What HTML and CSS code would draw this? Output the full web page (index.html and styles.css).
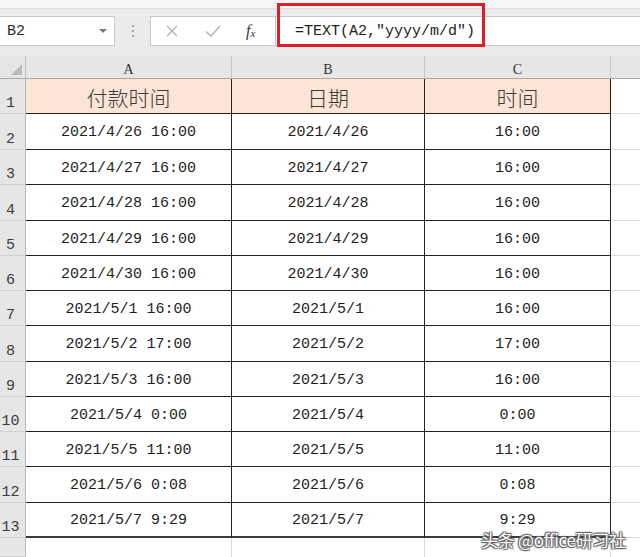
FILE: index.html
```html
<!DOCTYPE html>
<html lang="zh">
<head>
<meta charset="utf-8">
<title>TEXT</title>
<link rel="stylesheet" href="styles.css">
</head>
<body>
<div class="app">
  <div class="topbar">
    <div class="strip"></div>
    <div class="bar">
      <div class="namebox"><span class="nb-text">B2</span><span class="caret"></span></div>
      <div class="sep"><span></span><span></span><span></span></div>
      <div class="btnbox">
        <svg class="ico" width="16" height="16" viewBox="0 0 16 16"><path d="M3 3L13 13M13 3L3 13" stroke="#b4b4b4" stroke-width="1.4" fill="none"/></svg>
        <svg class="ico" width="18" height="16" viewBox="0 0 18 16"><path d="M2 8.5L7 13L16 3" stroke="#b4b4b4" stroke-width="1.4" fill="none"/></svg>
        <span class="fx">f<sub>x</sub></span>
      </div>
      <div class="formula">=TEXT(A2,″yyyy/m/d″)</div>
    </div>
    <div class="redbox"></div>
  </div>

  <div class="sheet">
    <div class="corner"><span class="tri"></span></div>
    <div class="colhead">A</div>
    <div class="colhead">B</div>
    <div class="colhead">C</div>
    <div class="colhead light"></div>

    <div class="rowhead">1</div>
    <div class="hd">付款时间</div>
    <div class="hd">日期</div>
    <div class="hd">时间</div>
    <div class="ext"></div>

    <div class="rowhead">2</div>
    <div class="cell">2021/4/26 16:00</div>
    <div class="cell">2021/4/26</div>
    <div class="cell">16:00</div>
    <div class="ext"></div>

    <div class="rowhead">3</div>
    <div class="cell">2021/4/27 16:00</div>
    <div class="cell">2021/4/27</div>
    <div class="cell">16:00</div>
    <div class="ext"></div>

    <div class="rowhead">4</div>
    <div class="cell">2021/4/28 16:00</div>
    <div class="cell">2021/4/28</div>
    <div class="cell">16:00</div>
    <div class="ext"></div>

    <div class="rowhead">5</div>
    <div class="cell">2021/4/29 16:00</div>
    <div class="cell">2021/4/29</div>
    <div class="cell">16:00</div>
    <div class="ext"></div>

    <div class="rowhead">6</div>
    <div class="cell">2021/4/30 16:00</div>
    <div class="cell">2021/4/30</div>
    <div class="cell">16:00</div>
    <div class="ext"></div>

    <div class="rowhead">7</div>
    <div class="cell">2021/5/1 16:00</div>
    <div class="cell">2021/5/1</div>
    <div class="cell">16:00</div>
    <div class="ext"></div>

    <div class="rowhead">8</div>
    <div class="cell">2021/5/2 17:00</div>
    <div class="cell">2021/5/2</div>
    <div class="cell">17:00</div>
    <div class="ext"></div>

    <div class="rowhead">9</div>
    <div class="cell">2021/5/3 16:00</div>
    <div class="cell">2021/5/3</div>
    <div class="cell">16:00</div>
    <div class="ext"></div>

    <div class="rowhead">10</div>
    <div class="cell">2021/5/4 0:00</div>
    <div class="cell">2021/5/4</div>
    <div class="cell">0:00</div>
    <div class="ext"></div>

    <div class="rowhead">11</div>
    <div class="cell">2021/5/5 11:00</div>
    <div class="cell">2021/5/5</div>
    <div class="cell">11:00</div>
    <div class="ext"></div>

    <div class="rowhead">12</div>
    <div class="cell">2021/5/6 0:08</div>
    <div class="cell">2021/5/6</div>
    <div class="cell">0:08</div>
    <div class="ext"></div>

    <div class="rowhead">13</div>
    <div class="cell last">2021/5/7 9:29</div>
    <div class="cell last">2021/5/7</div>
    <div class="cell last">9:29</div>
    <div class="ext"></div>

    <div class="rowhead"></div>
    <div class="blank"></div>
    <div class="blank"></div>
    <div class="blank"></div>
    <div class="blank end"></div>
  </div>

  <div class="watermark">头条 @office研习社</div>
</div>
</body>
</html>
```

FILE: styles.css
```css
* { box-sizing: border-box; }
html, body { margin: 0; padding: 0; background: #ffffff; }
body { width: 640px; height: 557px; overflow: hidden; font-family: "Liberation Mono", "Noto Sans CJK SC", monospace; color: #1e1e1e; }

.app { position: relative; width: 640px; height: 557px; overflow: hidden; }

.topbar { position: relative; height: 56px; background: #ebebeb; }
.strip { height: 9px; background: #f6f6f6; border-bottom: 1px solid #dedede; }
.bar { display: flex; align-items: stretch; height: 30px; margin-top: 7px; }

.namebox { width: 115px; background: #fff; border: 1px solid #c9c9c9; border-left: none; display: flex; align-items: center; justify-content: space-between; padding: 0 7px 0 7px; }
.nb-text { font-family: "Liberation Mono", monospace; font-size: 15px; color: #2a2a2a; }
.caret { width: 0; height: 0; border-left: 4px solid transparent; border-right: 4px solid transparent; border-top: 4px solid #7a7a7a; }

.sep { width: 35px; display: flex; flex-direction: column; align-items: center; justify-content: center; gap: 3px; }
.sep span { width: 2px; height: 2px; background: #a8a8a8; }

.btnbox { width: 126px; background: #fff; border: 1px solid #c9c9c9; display: flex; align-items: center; padding-left: 13px; gap: 0; }
.btnbox .ico { display: block; }
.btnbox .ico:first-child { margin-right: 24px; }
.btnbox .ico:nth-child(2) { margin-right: 24px; }
.fx { font-family: "Liberation Serif", serif; font-style: italic; font-size: 16px; color: #3a3a3a; }
.fx sub { font-size: 11px; vertical-align: -1px; }

.formula { flex: 1; background: #fff; border-top: 1px solid #c9c9c9; border-bottom: 1px solid #c9c9c9; display: flex; align-items: center; padding-left: 19px; font-family: "Liberation Mono", monospace; font-size: 15px; color: #222; letter-spacing: 0; }

.redbox { position: absolute; left: 277px; top: 3px; width: 208px; height: 44px; border: 3px solid #df1f27; }

.sheet { display: grid; grid-template-columns: 26px 206px 193px 186px 29px; grid-template-rows: 23px 35px 36px 35px 36px 35px 35px 35px 36px 35px 35px 35px 36px 35px 19px; }

.corner { background: #e6e6e6; border-right: 1px solid #bdbdbd; border-bottom: 1px solid #a9a9a9; position: relative; }
.tri { position: absolute; right: 3px; bottom: 3px; width: 0; height: 0; border-left: 11px solid transparent; border-bottom: 11px solid #bcbcbc; }

.colhead { background: #e6e6e6; border-right: 1px solid #c8c8c8; border-bottom: 1px solid #a9a9a9; display: flex; align-items: flex-end; justify-content: center; padding-bottom: 0; font-family: "Liberation Serif", serif; font-size: 14px; color: #333; }
.colhead.light { border-right: none; }

.rowhead { background: #e6e6e6; border-right: 1px solid #b9b9b9; border-bottom: 1px solid #d0d0d0; display: flex; align-items: flex-end; justify-content: center; padding-right: 4px; padding-bottom: 1px; font-family: "Liberation Mono", monospace; font-size: 15px; color: #3c3c3c; }

.hd { background: #fce4d6; border-right: 1px solid #222; border-bottom: 1px solid #222; display: flex; align-items: center; justify-content: center; padding-top: 2px; font-family: "Noto Sans CJK SC", sans-serif; font-size: 21px; font-weight: 300; color: #3a3a3a; letter-spacing: 0; }

.cell { background: #fff; border-right: 1px solid #222; border-bottom: 1px solid #222; display: flex; align-items: center; justify-content: center; padding-top: 2px; font-family: "Liberation Mono", monospace; font-size: 15px; color: #1e1e1e; }
.cell.last { border-bottom: 2px solid #3a3a3a; }

.ext { background: #fff; border-bottom: 1px solid #dadada; }
.blank { background: #fff; border-right: 1px solid #dadada; }
.blank.end { border-right: none; }

.watermark { position: absolute; left: 481px; top: 529px; font-family: "Noto Sans CJK SC", sans-serif; font-size: 17px; line-height: 22px; color: #ffffff; text-shadow: 0 0 1px #555, 1px 1px 1px #666, -1px -1px 1px #666, 1px -1px 1px #666, -1px 1px 1px #666; letter-spacing: -0.3px; }
```
